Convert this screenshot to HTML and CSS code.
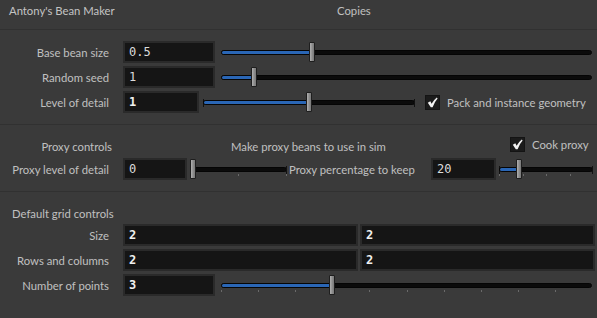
FILE: index.html
```html
<html>
<head>
    <title>Antony's Bean Maker</title>
    <link rel="stylesheet" href="styles.css">
</head>
<body>
    <div class="header">
        <span class="title">Antony's Bean Maker</span>
        <span class="copies">Copies</span>
    </div>

    <div class="section first">
        <div class="row">
            <span class="lbl">Base bean size</span>
            <div class="field w92">0.5</div>
            <div class="slider long">
                <div class="track"><div class="fill" style="width:24.5%"></div></div>
                <div class="handle" style="left:24.5%"></div>
            </div>
        </div>
        <div class="row">
            <span class="lbl">Random seed</span>
            <div class="field w92">1</div>
            <div class="slider long">
                <div class="track"><div class="fill" style="width:9%"></div></div>
                <div class="handle" style="left:9%"></div>
            </div>
        </div>
        <div class="row">
            <span class="lbl">Level of detail</span>
            <div class="field w76 bold">1</div>
            <div class="slider lod capped">
                <div class="track"><div class="fill" style="width:50%"></div></div>
                <div class="handle" style="left:50%"></div>
            </div>
            <label class="check pack">
                <span class="box"><svg width="13" height="13" viewBox="0 0 13 13"><path d="M1.8 6.8 L4.3 5.3 L5.6 7.8 Q7.6 3.8 10.8 1.4 L11.6 2.4 Q8.6 5.6 6.6 11.2 L4.8 11.2 Z" fill="#f2f2f2"/></svg></span>
                Pack and instance geometry
            </label>
        </div>
    </div>

    <div class="section second">
        <div class="caption">
            <span class="lbl wide">Proxy controls</span>
            <span class="note">Make proxy beans to use in sim</span>
            <label class="check cook">
                <span class="box"><svg width="13" height="13" viewBox="0 0 13 13"><path d="M1.8 6.8 L4.3 5.3 L5.6 7.8 Q7.6 3.8 10.8 1.4 L11.6 2.4 Q8.6 5.6 6.6 11.2 L4.8 11.2 Z" fill="#f2f2f2"/></svg></span>
                Cook proxy
            </label>
        </div>
        <div class="row">
            <span class="lbl">Proxy level of detail</span>
            <div class="field w64">0</div>
            <div class="slider plod capped ticks">
                <div class="track"><div class="fill" style="width:0%"></div></div>
                <div class="handle" style="left:3%"></div>
            </div>
            <span class="lbl inline">Proxy percentage to keep</span>
            <div class="field w65">20</div>
            <div class="slider pct capped ticks">
                <div class="track"><div class="fill" style="width:21%"></div></div>
                <div class="handle" style="left:21%"></div>
            </div>
        </div>
    </div>

    <div class="section third">
        <div class="caption">
            <span class="group">Default grid controls</span>
        </div>
        <div class="row">
            <span class="lbl">Size</span>
            <div class="field half bold">2</div>
            <div class="field half bold">2</div>
        </div>
        <div class="row">
            <span class="lbl">Rows and columns</span>
            <div class="field half bold">2</div>
            <div class="field half bold">2</div>
        </div>
        <div class="row">
            <span class="lbl">Number of points</span>
            <div class="field w92 bold">3</div>
            <div class="slider long ticks">
                <div class="track"><div class="fill" style="width:30%"></div></div>
                <div class="handle" style="left:30%"></div>
            </div>
        </div>
    </div>
</body>
</html>
```

FILE: styles.css
```css
body {
    margin: 0;
    background: #3a3a3a;
    font-family: Lato, "Noto Sans", sans-serif;
    font-size: 11.3px;
    color: #c0c0c0;
}
.header {
    height: 30px;
    box-sizing: border-box;
    padding: 3px 0 0 9px;
    border-bottom: 1px solid #313131;
    display: flex;
    line-height: 16px;
}
.title {
    width: 328px;
    color: #c4c4c4;
}
.section {
    border-bottom: 1px solid #313131;
    display: flex;
    flex-direction: column;
    gap: 3px;
}
.first {
    padding: 11px 0 11px;
}
.second {
    padding: 11px 0 11px;
    gap: 2px;
}
.third {
    border-bottom: none;
    padding: 12px 0 0;
}
.third .caption {
    height: 18px;
    margin-bottom: -1px;
}
.row {
    display: flex;
    align-items: center;
    height: 22px;
}
.caption {
    display: flex;
    align-items: center;
    height: 20px;
}
.lbl {
    width: 109px;
    margin-right: 14px;
    text-align: right;
    white-space: nowrap;
}
.lbl.wide {
    width: 112px;
    margin-right: 0;
}
.lbl.inline {
    width: 128px;
    margin: 0 14px 0 2px;
    text-align: left;
}
.note {
    margin-left: 119px;
    width: 279px;
}
.group {
    margin-left: 12px;
}
.field {
    height: 22px;
    box-sizing: border-box;
    background: #151515;
    border: 2px solid #2a2a2a;
    padding-left: 4px;
    font-family: "DejaVu Sans Mono", monospace;
    font-size: 12px;
    line-height: 18px;
    color: #dcdcdc;
    flex: none;
}
.field.bold {
    font-weight: bold;
    color: #f0f0f0;
}
.w92 { width: 92px; }
.w76 { width: 76px; }
.w64 { width: 64px; }
.w65 { width: 65px; }
.half {
    width: 235px;
    margin-right: 2px;
}
.slider {
    position: relative;
    height: 22px;
    flex: none;
}
.long {
    width: 371px;
    margin-left: 6px;
}
.lod {
    width: 212px;
    margin-left: 4px;
}
.plod {
    width: 97px;
    margin-left: 3px;
}
.pct {
    width: 94px;
    margin-left: 3px;
}
.track {
    position: absolute;
    left: 0;
    right: 0;
    top: 9px;
    height: 5px;
    box-sizing: border-box;
    background: #0b0b0b;
    border: 1px solid #050505;
    border-radius: 3px;
}
.fill {
    height: 3px;
    background: #2a66b5;
    border-radius: 2px;
}
.handle {
    position: absolute;
    top: 1px;
    width: 6px;
    height: 20px;
    margin-left: -3px;
    box-sizing: border-box;
    background: linear-gradient(to right, #b0b0b0, #8a8a8a 60%, #7a7a7a);
    border: 1px solid #1e1e1e;
    border-radius: 1px;
}
.capped::before,
.capped::after {
    content: "";
    position: absolute;
    top: 8px;
    width: 1px;
    height: 8px;
    background: #111;
}
.capped::before { left: 0; }
.capped::after { right: 0; }
.ticks .track::after {
    content: "";
    position: absolute;
    left: -1px;
    right: -1px;
    top: 6px;
    height: 2px;
    background: repeating-linear-gradient(to right, #6a6a6a 0, #6a6a6a 1px, transparent 1px, transparent 10%);
}
.plod .track::after {
    background: repeating-linear-gradient(to right, transparent 0, transparent 49%, #6a6a6a 49%, #6a6a6a 50%, transparent 50%);
}
.pct .track::after {
    background: repeating-linear-gradient(to right, #6a6a6a 0, #6a6a6a 1px, transparent 1px, transparent 25%);
}
.check {
    display: flex;
    align-items: center;
    white-space: nowrap;
}
.box {
    width: 13px;
    height: 13px;
    background: #1b1b1b;
    border: 1px solid #141414;
    display: flex;
}
.pack {
    margin-left: 10px;
    gap: 7px;
}
.cook {
    margin-left: 0;
    gap: 7px;
    margin-top: -4px;
}
```
